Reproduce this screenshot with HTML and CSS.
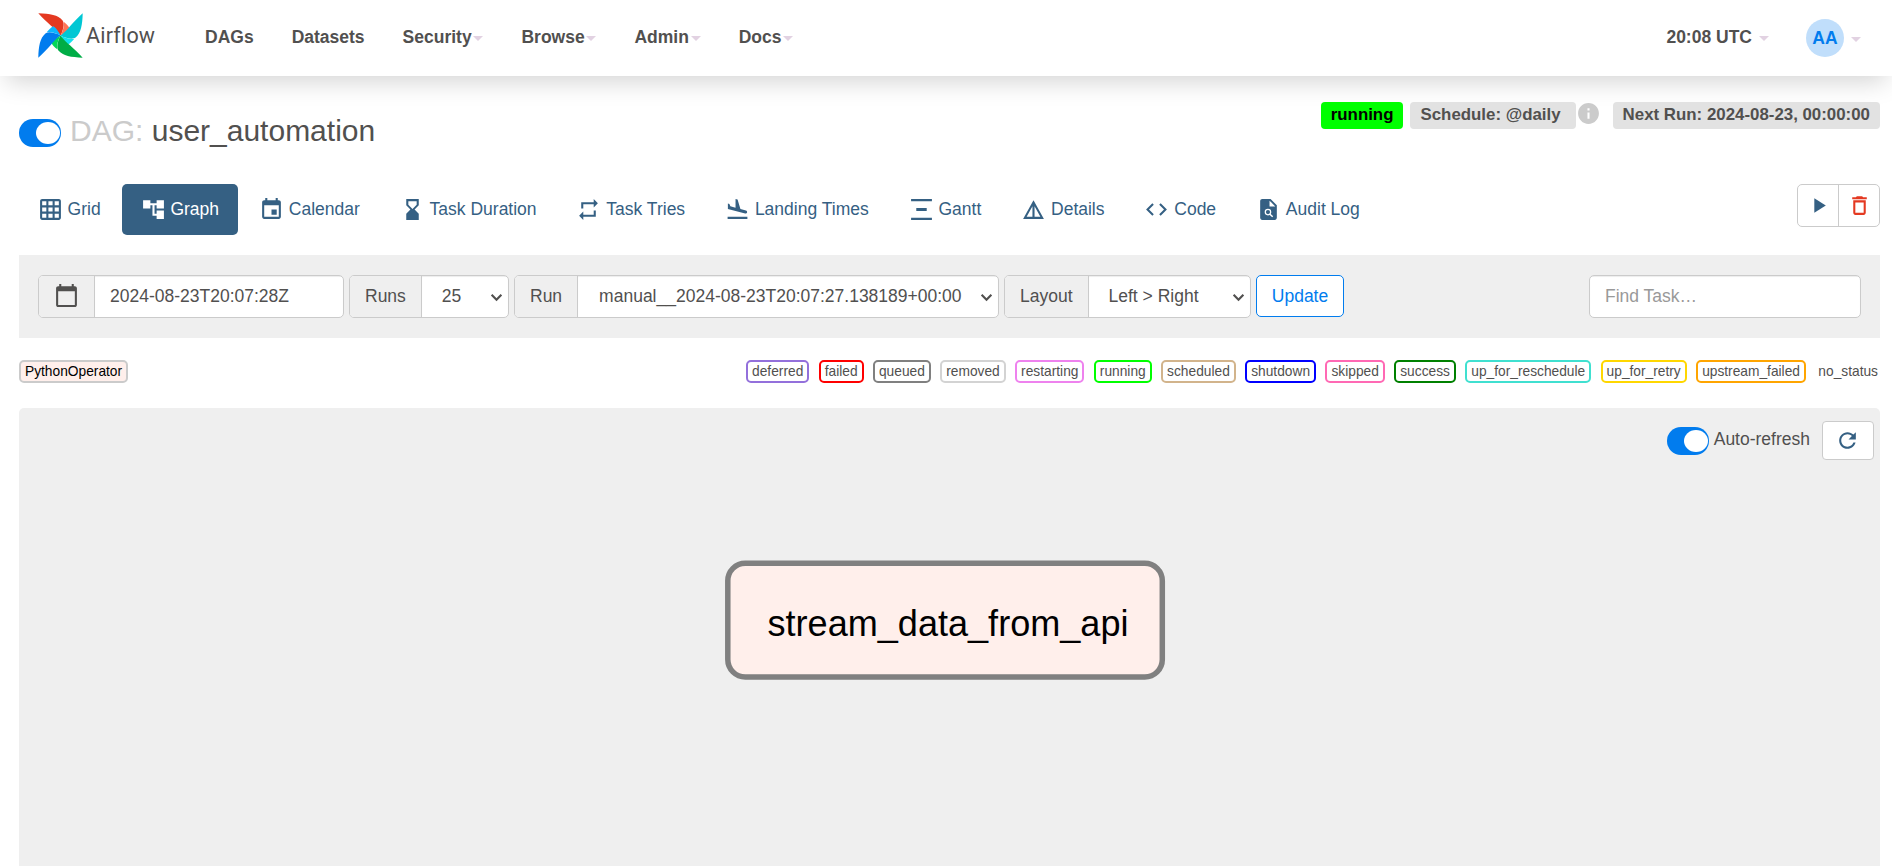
FILE: index.html
```html
<!DOCTYPE html>
<html lang="en">
<head>
<meta charset="utf-8">
<title>user_automation - Graph - Airflow</title>
<link rel="stylesheet" href="styles.css">
</head>
<body>
<header class="navbar">
  <a class="brand">
    <svg class="pinwheel" viewBox="0 0 45 45">
      <g fill="#e43921"><path d="M.3.3C12 .6 20 2 24.6 7.4 27 11 25 17 22.7 22.5 19 18 16.500 15.500 13 12.800 9 9 4 4.500.3.3z"/></g>
      <path fill="#ff7557" d="M25.700 8.700C28.500 11 31 13.500 31.700 15.600 29 19 26 20.500 22.700 22.500 25 17 26.500 13 25.700 8.700z"/>
      <g transform="rotate(90 22.500 22.500)"><path fill="#00c7d4" d="M.3.3C12 .6 20 2 24.6 7.4 27 11 25 17 22.700 22.500 19 18 16.500 15.500 13 12.800 9 9 4 4.500.3.3z"/><path fill="#11e1ee" d="M25.700 8.700C28.500 11 31 13.500 31.700 15.600 29 19 26 20.500 22.700 22.500 25 17 26.500 13 25.700 8.700z"/></g>
      <g transform="rotate(180 22.500 22.500)"><path fill="#00ad46" d="M.3.3C12 .6 20 2 24.6 7.4 27 11 25 17 22.700 22.500 19 18 16.500 15.500 13 12.800 9 9 4 4.500.3.3z"/><path fill="#04d659" d="M25.700 8.700C28.500 11 31 13.500 31.700 15.600 29 19 26 20.500 22.700 22.500 25 17 26.500 13 25.700 8.700z"/></g>
      <g transform="rotate(270 22.500 22.500)"><path fill="#017cee" d="M.3.3C12 .6 20 2 24.6 7.4 27 11 25 17 22.700 22.500 19 18 16.500 15.500 13 12.800 9 9 4 4.500.3.3z"/><path fill="#0cb6ff" d="M25.700 8.700C28.500 11 31 13.500 31.700 15.600 29 19 26 20.500 22.700 22.500 25 17 26.500 13 25.700 8.700z"/></g>
    </svg>
    <span class="brand-name">Airflow</span>
  </a>
  <nav class="menu">
    <a>DAGs</a>
    <a>Datasets</a>
    <a>Security<b class="caret"></b></a>
    <a>Browse<b class="caret"></b></a>
    <a>Admin<b class="caret"></b></a>
    <a>Docs<b class="caret"></b></a>
  </nav>
  <div class="account">
    <a>20:08 UTC <b class="caret"></b></a>
    <a class="user"><span class="avatar">AA</span><b class="caret"></b></a>
  </div>
</header>

<main class="page">
  <div class="heading">
    <h3 class="dag-title"><span class="switch"></span><span class="muted">DAG:</span> user_automation</h3>
    <div class="badges">
      <span class="badge badge-running">running</span>
      <span class="badge badge-schedule">Schedule: @daily</span>
      <svg class="info" viewBox="0 0 24 24"><path fill="#cbcbcb" d="M12 2C6.480 2 2 6.480 2 12s4.480 10 10 10 10-4.480 10-10S17.520 2 12 2zm1 15h-2v-6h2v6zm0-8h-2V7h2v2z"/></svg>
      <span class="badge">Next Run: 2024-08-23, 00:00:00</span>
    </div>
  </div>

  <div class="tabs-row">
    <nav class="tabs">
      <a><svg viewBox="0 0 24 24"><path d="M20 2H4c-1.100 0-2 .9-2 2v16c0 1.100.9 2 2 2h16c1.100 0 2-.9 2-2V4c0-1.100-.9-2-2-2zM8 20H4v-4h4v4zm0-6H4v-4h4v4zm0-6H4V4h4v4zm6 12h-4v-4h4v4zm0-6h-4v-4h4v4zm0-6h-4V4h4v4zm6 12h-4v-4h4v4zm0-6h-4v-4h4v4zm0-6h-4V4h4v4z"/></svg>Grid</a>
      <a class="active"><svg viewBox="0 0 24 24"><path d="M22 11V3h-7v3H9V3H2v8h7V8h2v10h4v3h7v-8h-7v3h-2V8h2v3h7z"/></svg>Graph</a>
      <a><svg viewBox="0 0 24 24"><path d="M17 12h-5v5h5v-5zM16 1v2H8V1H6v2H5c-1.110 0-1.990.9-1.990 2L3 19c0 1.100.89 2 2 2h14c1.100 0 2-.9 2-2V5c0-1.100-.9-2-2-2h-1V1h-2zm3 18H5V8h14v11z"/></svg>Calendar</a>
      <a><svg viewBox="0 0 24 24"><path d="M6 2v6h.01L6 8.010 10 12l-4 4 .01.01H6V22h12v-5.990h-.01L18 16l-4-4 4-3.990-.01-.01H18V2H6zm10 5.500l-4 4-4-4V4h8v3.500z"/></svg>Task Duration</a>
      <a><svg viewBox="0 0 24 24"><path d="M7 7h10v3l4-4-4-4v3H5v6h2V7zm10 10H7v-3l-4 4 4 4v-3h12v-6h-2v4z"/></svg>Task Tries</a>
      <a><svg viewBox="0 0 24 24"><path d="M2.500 19h19v2h-19zm16.840-3.150c.8.210 1.620-.26 1.840-1.060.21-.8-.26-1.620-1.060-1.840l-5.310-1.420-2.760-9.020L10.120 2v8.280L5.150 8.950l-.93-2.320-1.450-.39v5.170l16.570 4.440z"/></svg>Landing Times</a>
      <a><svg viewBox="0 0 24 24"><path d="M2 2h20v2H2zM7 10.500h10v3H7zM2 20h20v2H2z"/></svg>Gantt</a>
      <a><svg viewBox="0 0 24 24"><path d="M12 3L2 21h20L12 3zm1 5.920L18.600 19H13V8.920zm-2 0V19H5.400L11 8.920z"/></svg>Details</a>
      <a><svg viewBox="0 0 24 24"><path d="M9.400 16.600L4.800 12l4.600-4.600L8 6l-6 6 6 6 1.400-1.400zm5.200 0l4.600-4.600-4.600-4.600L16 6l6 6-6 6-1.400-1.400z"/></svg>Code</a>
      <a><svg viewBox="0 0 24 24"><path d="M11.500 12.500a2 2 0 1 0 2 2 2 2 0 0 0-2-2zM14 2H6c-1.100 0-2 .9-2 2v16c0 1.100.89 2 2 2h12c1.100 0 2-.9 2-2V8l-6-6zm1.520 17.500l-2.310-2.300c-.5.300-1.080.48-1.710.48a3.180 3.180 0 1 1 3.180-3.180c0 .63-.18 1.210-.49 1.710l2.310 2.310-.98.980zM13 9V3.500L18.500 9H13z"/></svg>Audit Log</a>
    </nav>
    <div class="actions">
      <a><svg viewBox="0 0 24 24"><path fill="#356083" d="M8 5v14l11-7z"/></svg></a>
      <a><svg viewBox="0 0 24 24"><path fill="#e43921" d="M6 19c0 1.100.9 2 2 2h8c1.100 0 2-.9 2-2V7H6v12zM8 9h8v10H8V9zm7.500-5l-1-1h-5l-1 1H5v2h14V4z"/></svg></a>
    </div>
  </div>

  <div class="filters">
    <div class="group group-date">
      <span class="addon addon-date"><svg viewBox="0 0 24 24"><path fill="#51504f" d="M20 3h-1V1h-2v2H7V1H5v2H4c-1.100 0-2 .9-2 2v16c0 1.100.9 2 2 2h16c1.100 0 2-.9 2-2V5c0-1.100-.9-2-2-2zm0 18H4V8h16v13z"/></svg></span>
      <span class="field">2024-08-23T20:07:28Z</span>
    </div>
    <div class="group group-runs"><span class="addon">Runs</span><span class="field select">25<svg viewBox="0 0 12 8"><path d="M1.500 1.500L6 6l4.500-4.500"/></svg></span></div>
    <div class="group group-run"><span class="addon">Run</span><span class="field select">manual__2024-08-23T20:07:27.138189+00:00<svg viewBox="0 0 12 8"><path d="M1.500 1.500L6 6l4.500-4.500"/></svg></span></div>
    <div class="group group-layout"><span class="addon">Layout</span><span class="field select">Left &gt; Right<svg viewBox="0 0 12 8"><path d="M1.500 1.500L6 6l4.500-4.500"/></svg></span></div>
    <a class="update">Update</a>
    <div class="group find"><span class="field">Find Task…</span></div>
  </div>

  <div class="legend">
    <span class="pill operator">PythonOperator</span>
    <div class="states">
      <span class="pill deferred">deferred</span>
      <span class="pill failed">failed</span>
      <span class="pill queued">queued</span>
      <span class="pill removed">removed</span>
      <span class="pill restarting">restarting</span>
      <span class="pill running">running</span>
      <span class="pill scheduled">scheduled</span>
      <span class="pill shutdown">shutdown</span>
      <span class="pill skipped">skipped</span>
      <span class="pill success">success</span>
      <span class="pill up-for-reschedule">up_for_reschedule</span>
      <span class="pill up-for-retry">up_for_retry</span>
      <span class="pill upstream-failed">upstream_failed</span>
      <span class="pill no-status">no_status</span>
    </div>
  </div>

  <section class="graph">
    <div class="refresh">
      <span class="switch"></span>
      <span class="refresh-label">Auto-refresh</span>
      <a class="refresh-button"><svg viewBox="0 0 24 24"><path fill="#356083" d="M17.650 6.350C16.200 4.900 14.210 4 12 4c-4.420 0-7.990 3.580-7.990 8s3.570 8 7.990 8c3.730 0 6.840-2.550 7.730-6h-2.080c-.82 2.330-3.040 4-5.650 4-3.310 0-6-2.690-6-6s2.690-6 6-6c1.660 0 3.140.69 4.220 1.780L13 11h7V4l-2.350 2.350z"/></svg></a>
    </div>
    <svg class="node" width="441" height="121" viewBox="0 0 441 121">
      <rect x="2.800" y="3.200" width="434.500" height="113.800" rx="17.500"/>
      <text x="42.500" y="76">stream_data_from_api</text>
    </svg>
  </section>
</main>
</body>
</html>
```
FILE: styles.css
```css
* { box-sizing: border-box; }

body {
  margin: 0;
  height: 866px;
  overflow: hidden;
  display: flex;
  flex-direction: column;
  background: #fff;
  color: #51504f;
  font: 17.5px/25px "Liberation Sans", Arial, sans-serif;
}

svg { display: block; flex: none; }

/* Top navigation */
.navbar {
  height: 76px;
  flex: none;
  display: flex;
  align-items: center;
  padding: 0 31px 0 38px;
  background: #fff;
  box-shadow: 0 12px 25px -6px rgba(0, 0, 0, .17);
  font-weight: 700;
}
.brand { display: flex; align-items: center; width: 167px; height: 76px; padding-bottom: 6px; }
.pinwheel { width: 45px; height: 45px; }
.brand-name { font: 400 21.500px/26px Roboto, sans-serif; letter-spacing: .2px; margin-left: 3px; padding-top: 2px; }
.menu { display: flex; gap: 38px; padding-bottom: 1px; }
.menu a { display: flex; align-items: center; }
.caret {
  width: 10px;
  height: 5px;
  margin: 2px 0 0 1.800px;
  border: 5px solid transparent;
  border-top-color: #e2d2e2;
  border-bottom: 0;
}
.account { display: flex; gap: 37px; margin-left: auto; align-items: center; }
.account a { display: flex; align-items: center; }
.account a:first-child { padding-bottom: 1px; }
.account .caret { margin-left: 7px; }
.avatar {
  width: 38px;
  height: 38px;
  border-radius: 50%;
  background: #c0defb;
  color: #017cee;
  text-align: center;
  line-height: 38px;
}

/* Page heading */
.page { padding: 0 12px 0 19px; flex: 1; display: flex; flex-direction: column; }
.heading { display: flex; height: 108px; justify-content: space-between; }
.dag-title { margin: 38px 0 0; font-size: 30px; line-height: 33px; font-weight: 400; height: 33px; display: flex; white-space: pre; }
.muted { color: #cbcbcb; margin-left: 9px; }
.switch {
  flex: none;
  width: 42px;
  height: 28px;
  border-radius: 14px;
  background: #017cee;
  padding: 3px 1px 3px 17px;
}
.switch::before { content: ""; display: block; height: 22px; border-radius: 50%; background: #fff; }
.dag-title .switch { margin-top: 5px; }
.badges { display: flex; align-items: flex-start; padding-top: 26px; font-size: 16.875px; font-weight: 700; }
.badge { height: 27px; padding: 0 10px; border-radius: 4px; background: #e2e2e2; line-height: 26px; white-space: nowrap; }
.badge-running { background: #0f0; color: #000; margin-right: 7px; }
.badge-schedule { padding-right: 15px; }
.info { width: 25px; height: 25px; margin: -1px 12px 0 0; }

/* View tabs */
.tabs-row { display: flex; justify-content: space-between; align-items: flex-start; height: 71px; }
.tabs { display: flex; gap: 2.400px; color: #356083; }
.tabs a { display: flex; align-items: center; height: 51px; padding: 0 18.750px; border-radius: 5px; white-space: nowrap; }
.tabs svg { width: 25px; height: 25px; margin-right: 4.860px; fill: currentColor; }
.tabs .active { background: #356083; color: #fff; }
.actions { display: flex; width: 83px; height: 43px; border: 1px solid #cbcbcb; border-radius: 5px; }
.actions a { flex: 1; display: flex; justify-content: center; padding-top: 8px; }
.actions a + a { border-left: 1px solid #cbcbcb; }
.actions svg { width: 25px; height: 25px; }

/* Filter form */
.filters { display: flex; height: 83px; padding: 20px 19px 0; background: #efefef; }
.group { display: flex; height: 43px; margin-right: 5px; border: 1px solid #cbcbcb; border-radius: 5px; background: #fff; overflow: hidden; line-height: 40px; }
.addon { padding: 0 15px; background: #efefef; border-right: 1px solid #cbcbcb; }
.addon-date { width: 56px; padding-top: 7px; }
.addon-date svg { width: 25px; height: 25px; }
.field { flex: 1; position: relative; padding-left: 15px; white-space: nowrap; box-shadow: inset 0 1px 1px rgba(0, 0, 0, .075); }
.select { padding-left: 20px; }
.select svg { position: absolute; right: 5px; top: 17px; width: 13px; height: 9px; fill: none; stroke: #51504f; stroke-width: 2; }
.group-date { width: 306px; }
.group-runs { width: 160px; }
.group-run { width: 485px; }
.group-run .select { padding-left: 21px; }
.group-layout { width: 247px; }
.update { width: 88px; height: 42px; border: 1px solid #017cee; border-radius: 5px; background: #fff; color: #017cee; text-align: center; line-height: 40px; }
.find { width: 272px; margin: 0 0 0 auto; color: #999; }

/* Legend */
.legend { display: flex; justify-content: space-between; height: 70px; padding-top: 22px; font-size: 13.750px; line-height: 19px; }
.states { display: flex; gap: 9.400px; }
.pill { height: 23px; padding: 0 4px; border: 2px solid #fff; border-radius: 5px; white-space: nowrap; }
.operator { background: #ffefeb; border-color: #cbcbcb; color: #000; }
.deferred { border-color: mediumpurple; }
.failed { border-color: red; }
.queued { border-color: gray; }
.removed { border-color: lightgrey; }
.restarting { border-color: violet; }
.running { border-color: lime; }
.scheduled { border-color: tan; }
.shutdown { border-color: blue; }
.skipped { border-color: hotpink; }
.success { border-color: green; }
.up-for-reschedule { border-color: turquoise; }
.up-for-retry { border-color: gold; }
.upstream-failed { border-color: orange; }
.no-status { padding: 0 0 0 1px; }

/* Graph canvas */
.graph { flex: 1; position: relative; background: #efefef; border-radius: 5px 5px 0 0; }
.refresh { display: flex; justify-content: flex-end; padding: 13px 6px 0 0; }
.refresh .switch { margin-top: 6px; }
.refresh-label { margin: 6px 12px 0 5px; }
.refresh-button { width: 52px; height: 39px; padding: 6px 0 0 12px; border: 1px solid #cbcbcb; border-radius: 4px; background: #fff; }
.refresh-button svg { width: 25px; height: 25px; }
.node { position: absolute; left: 706px; top: 152px; }
.node rect { fill: #ffefeb; stroke: gray; stroke-width: 5.500px; }
.node text { font-size: 36.100px; fill: #000; }
```
